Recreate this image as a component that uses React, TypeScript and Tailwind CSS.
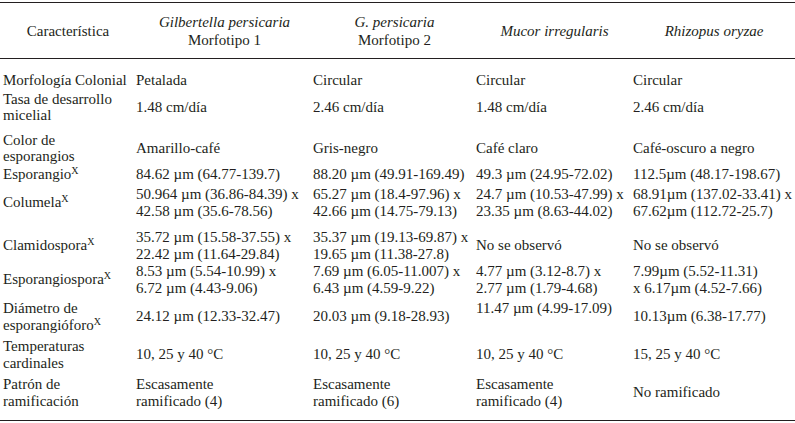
const cols = "grid grid-cols-[136px_177px_163px_157px_162px]";

function X() {
  return <sup className="text-[10px]">X</sup>;
}

type Row = {
  gap: string;
  cells: React.ReactNode[];
  top?: number[];
};

const rows: Row[] = [
  {
    gap: "mt-[13px]",
    cells: ["Morfología Colonial", "Petalada", "Circular", "Circular", "Circular"],
  },
  {
    gap: "mt-[2px]",
    cells: [
      <>Tasa de desarrollo<br />micelial</>,
      "1.48 cm/día",
      "2.46 cm/día",
      "1.48 cm/día",
      "2.46 cm/día",
    ],
  },
  {
    gap: "mt-[8px]",
    cells: [
      <>Color de<br />esporangios</>,
      "Amarillo-café",
      "Gris-negro",
      "Café claro",
      "Café-oscuro a negro",
    ],
  },
  {
    gap: "mt-[1px]",
    cells: [
      <>Esporangio<X /></>,
      "84.62 µm (64.77-139.7)",
      "88.20 µm (49.91-169.49)",
      "49.3 µm (24.95-72.02)",
      "112.5µm (48.17-198.67)",
    ],
  },
  {
    gap: "mt-[4px]",
    cells: [
      <>Columela<X /></>,
      <>50.964 µm (36.86-84.39) x<br />42.58 µm (35.6-78.56)</>,
      <>65.27 µm (18.4-97.96) x<br />42.66 µm (14.75-79.13)</>,
      <>24.7 µm (10.53-47.99) x<br />23.35 µm (8.63-44.02)</>,
      <>68.91µm (137.02-33.41) x<br />67.62µm (112.72-25.7)</>,
    ],
  },
  {
    gap: "mt-[10px]",
    cells: [
      <>Clamidospora<X /></>,
      <>35.72 µm (15.58-37.55) x<br />22.42 µm (11.64-29.84)</>,
      <>35.37 µm (19.13-69.87) x<br />19.65 µm (11.38-27.8)</>,
      "No se observó",
      "No se observó",
    ],
  },
  {
    gap: "mt-[1px]",
    cells: [
      <>Esporangiospora<X /></>,
      <>8.53 µm (5.54-10.99) x<br />6.72 µm (4.43-9.06)</>,
      <>7.69 µm (6.05-11.007) x<br />6.43 µm (4.59-9.22)</>,
      <>4.77 µm (3.12-8.7) x<br />2.77 µm (1.79-4.68)</>,
      <>7.99µm (5.52-11.31)<br />x 6.17µm (4.52-7.66)</>,
    ],
  },
  {
    gap: "mt-[4px]",
    top: [3],
    cells: [
      <>Diámetro de<br />esporangióforo<X /></>,
      "24.12 µm (12.33-32.47)",
      "20.03 µm (9.18-28.93)",
      "11.47 µm (4.99-17.09)",
      "10.13µm (6.38-17.77)",
    ],
  },
  {
    gap: "mt-[5px]",
    cells: [
      <>Temperaturas<br />cardinales</>,
      "10, 25 y 40 °C",
      "10, 25 y 40 °C",
      "10, 25 y 40 °C",
      "15, 25 y 40 °C",
    ],
  },
  {
    gap: "mt-[5px]",
    cells: [
      <>Patrón de<br />ramificación</>,
      <>Escasamente<br />ramificado (4)</>,
      <>Escasamente<br />ramificado (6)</>,
      <>Escasamente<br />ramificado (4)</>,
      "No ramificado",
    ],
  },
];

export default function App() {
  return (
    <div className="w-[795px] h-[423px] bg-white pt-[2px] font-[family-name:Liberation_Serif,serif] text-[15px] leading-[16.5px] text-[#231f20]">
      <div className={`${cols} h-[57px] items-center text-center leading-[18px] border-y-[1.5px] border-[#231f20]`}>
        <div>Característica</div>
        <div>
          <i>Gilbertella persicaria</i>
          <br />
          Morfotipo 1
        </div>
        <div>
          <i>G. persicaria</i>
          <br />
          Morfotipo 2
        </div>
        <div>
          <i>Mucor irregularis</i>
        </div>
        <div>
          <i>Rhizopus oryzae</i>
        </div>
      </div>

      {rows.map((row, i) => (
        <div key={i} className={`${cols} ${row.gap} items-center whitespace-nowrap`}>
          {row.cells.map((c, j) => (
            <div
              key={j}
              className={`${j === 0 ? "pl-[3px]" : ""} ${row.top?.includes(j) ? "self-start" : ""}`}
            >
              {c}
            </div>
          ))}
        </div>
      ))}

      <div className="mt-[11px] border-t-[1.5px] border-[#231f20]" />
    </div>
  );
}
